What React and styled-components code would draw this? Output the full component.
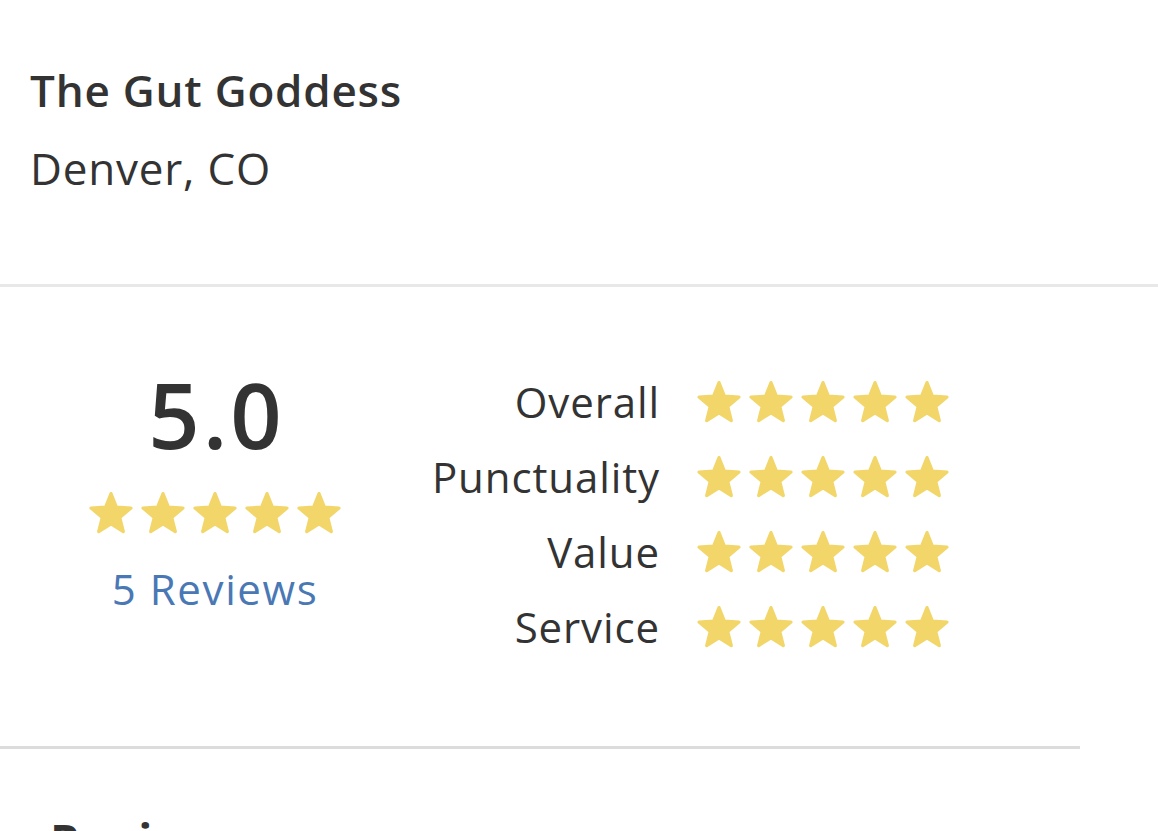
import styled, { createGlobalStyle } from 'styled-components';

const ratings = [
	{ label: 'Overall', value: 5 },
	{ label: 'Punctuality', value: 5 },
	{ label: 'Value', value: 5 },
	{ label: 'Service', value: 5 },
];

function Star() {
	return (
		<StarSvg viewBox="0 0 24 24">
			<path d="M12 2.3 L14.7 9.08 L21.99 9.56 L16.37 14.22 L18.17 21.29 L12 17.4 L5.83 21.29 L7.63 14.22 L2.01 9.56 L9.3 9.08 Z" />
		</StarSvg>
	);
}

function Stars({ count = 5 }) {
	return (
		<StarRow>
			{Array.from({ length: count }).map((_, idx) => (
				<Star key={idx} />
			))}
		</StarRow>
	);
}

function App() {
	return (
		<Container>
			<GlobalStyle />
			<Header>
				<h1>The Gut Goddess</h1>
				<p>Denver, CO</p>
			</Header>
			<Divider />
			<RatingSection>
				<Summary>
					<Score>5.0</Score>
					<Stars />
					<ReviewLink>5 Reviews</ReviewLink>
				</Summary>
				<Breakdown>
					{ratings.map((r) => (
						<BreakdownRow key={r.label}>
							<Label>{r.label}</Label>
							<Stars count={r.value} />
						</BreakdownRow>
					))}
				</Breakdown>
			</RatingSection>
			<Divider $short />
			<ReviewsTitle>Reviews</ReviewsTitle>
		</Container>
	);
}

export default App;

const GlobalStyle = createGlobalStyle`
	body {
		margin: 0;
		background: #fff;
		font-family: 'Open Sans', Lato, sans-serif;
		color: #333;
	}
	* {
		box-sizing: border-box;
	}
`;

const Container = styled.div`
	width: 1158px;
	height: 831px;
	overflow: hidden;
`;

const Header = styled.div`
	padding: 62px 30px 0;
	height: 284px;

	h1 {
		margin: 0;
		font-size: 44px;
		font-weight: 600;
		letter-spacing: 0.8px;
		line-height: 56px;
		color: #333;
	}
	p {
		margin: 22px 0 0;
		font-size: 44px;
		font-weight: 400;
		letter-spacing: 0.8px;
		line-height: 56px;
		color: #333;
	}
`;

const Divider = styled.div`
	height: 3px;
	width: ${({ $short }) => ($short ? '1080px' : '100%')};
	background: ${({ $short }) => ($short ? '#dcdcdc' : '#e8e8e8')};
`;

const RatingSection = styled.div`
	display: flex;
	height: 459px;
	padding-top: 77px;
`;

const Summary = styled.div`
	width: 430px;
	display: flex;
	flex-direction: column;
	align-items: center;
`;

const Score = styled.div`
	font-size: 90px;
	font-weight: 600;
	letter-spacing: 3px;
	line-height: 100px;
	color: #333;
	margin-bottom: 25px;
	padding-left: 3px;
`;

const ReviewLink = styled.a`
	margin-top: 27px;
	font-size: 42px;
	letter-spacing: 1.6px;
	line-height: 50px;
	color: #4a78b5;
	cursor: pointer;
`;

const StarRow = styled.div`
	display: flex;
	gap: 4px;
`;

const StarSvg = styled.svg`
	width: 48px;
	height: 48px;
	display: block;

	path {
		fill: #f2d669;
		stroke: #f2d669;
		stroke-width: 1.6;
		stroke-linejoin: round;
	}
`;

const Breakdown = styled.div`
	display: flex;
	flex-direction: column;
`;

const BreakdownRow = styled.div`
	display: grid;
	grid-template-columns: 230px auto;
	column-gap: 35px;
	align-items: center;
	height: 75px;
`;

const Label = styled.span`
	text-align: right;
	font-size: 42px;
	letter-spacing: 0.9px;
	line-height: 50px;
	color: #333;
`;

const ReviewsTitle = styled.h2`
	margin: 66px 0 0 50px;
	font-size: 46px;
	font-weight: 700;
	letter-spacing: 1.5px;
	line-height: 50px;
	color: #333;
`;
